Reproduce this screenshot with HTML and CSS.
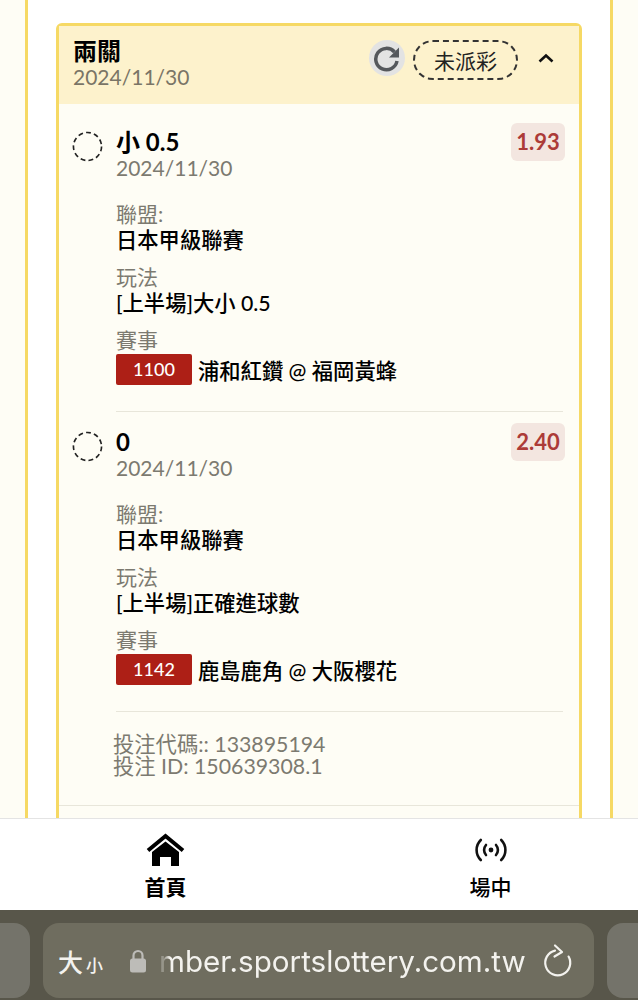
FILE: index.html
```html
<!DOCTYPE html>
<html lang="zh-Hant">
<head>
    <meta charset="UTF-8">
    <title>投注記錄</title>
    <link rel="stylesheet" href="styles.css">
</head>
<body>
    <div class="page">
        <div class="outer">
            <div class="card">
                <div class="card-head">
                    <div class="head-text">
                        <div class="head-title">兩關</div>
                        <div class="head-date">2024/11/30</div>
                    </div>
                    <div class="refresh">
                        <svg width="28" height="28" viewBox="0 0 28 28">
                            <path d="M21.5 8A10.7 10.7 0 1 0 24 17" fill="none" stroke="#55585c" stroke-width="3.5"/>
                            <path d="M26 3.5V13.5H16Z" fill="#55585c"/>
                        </svg>
                    </div>
                    <div class="status">未派彩</div>
                    <svg class="chevron" width="16" height="10" viewBox="0 0 16 10">
                        <path d="M1.5 8.5L8 2.5L14.5 8.5" fill="none" stroke="#111" stroke-width="2.6"/>
                    </svg>
                </div>
                <div class="list">
                    <div class="item">
                        <svg class="circle" width="31" height="31" viewBox="0 0 32 32">
                            <circle cx="16" cy="16" r="14.5" fill="none" stroke="#222" stroke-width="1.7" stroke-dasharray="5 3.3"/>
                        </svg>
                        <div class="item-body">
                            <div class="item-head">
                                <div>
                                    <div class="item-title">小 0.5</div>
                                    <div class="item-date">2024/11/30</div>
                                </div>
                                <div class="odds">1.93</div>
                            </div>
                            <div class="label first">聯盟:</div>
                            <div class="value">日本甲級聯賽</div>
                            <div class="label">玩法</div>
                            <div class="value">[上半場]大小 0.5</div>
                            <div class="label">賽事</div>
                            <div class="match">
                                <span class="match-no">1100</span>
                                <span class="match-name">浦和紅鑽 @ 福岡黃蜂</span>
                            </div>
                        </div>
                    </div>
                    <div class="item">
                        <svg class="circle" width="31" height="31" viewBox="0 0 32 32">
                            <circle cx="16" cy="16" r="14.5" fill="none" stroke="#222" stroke-width="1.7" stroke-dasharray="5 3.3"/>
                        </svg>
                        <div class="item-body">
                            <div class="item-head">
                                <div>
                                    <div class="item-title">0</div>
                                    <div class="item-date">2024/11/30</div>
                                </div>
                                <div class="odds">2.40</div>
                            </div>
                            <div class="label first">聯盟:</div>
                            <div class="value">日本甲級聯賽</div>
                            <div class="label">玩法</div>
                            <div class="value">[上半場]正確進球數</div>
                            <div class="label">賽事</div>
                            <div class="match">
                                <span class="match-no">1142</span>
                                <span class="match-name">鹿島鹿角 @ 大阪櫻花</span>
                            </div>
                        </div>
                    </div>
                </div>
                <div class="codes">
                    <div>投注代碼:: 133895194</div>
                    <div>投注 ID: 150639308.1</div>
                </div>
            </div>
        </div>
    </div>
    <div class="tabbar">
        <div class="tab tab-home">
            <svg width="39" height="34" viewBox="0 0 39 34">
                <path d="M2 17.5L19.5 3L37 17.5" fill="none" stroke="#000" stroke-width="4"/>
                <path d="M19.5 8.5L33 19V33H25V24H14V33H6V19Z" fill="#000"/>
            </svg>
            <span>首頁</span>
        </div>
        <div class="tab tab-live">
            <svg width="38" height="34" viewBox="0 0 38 34">
                <circle cx="19" cy="17" r="2.4" fill="#111"/>
                <path d="M14 12a7.5 7.5 0 0 0 0 10M24 12a7.5 7.5 0 0 1 0 10M8.8 7a14 14 0 0 0 0 20M29.2 7a14 14 0 0 1 0 20" fill="none" stroke="#111" stroke-width="2.6" stroke-linecap="round"/>
            </svg>
            <span>場中</span>
        </div>
    </div>
    <div class="browser">
        <div class="side-tab left"></div>
        <div class="address">
            <span class="text-size"><span class="big">大</span><span class="small">小</span></span>
            <svg class="lock" width="18" height="26" viewBox="0 0 18 26">
                <path d="M4.5 12V7.5a4.5 4.5 0 0 1 9 0V12" fill="none" stroke="#bdbcb8" stroke-width="2.2"/>
                <rect x="1" y="10.5" width="16" height="14" rx="2.5" fill="#bdbcb8"/>
            </svg>
            <span class="url">mber.sportslottery.com.tw</span>
            <svg class="reload" width="32" height="36" viewBox="0 0 32 36">
                <path d="M10.5 8.5A12.5 12.5 0 1 0 25 11.5" transform="rotate(12 16 20)" fill="none" stroke="#f3f2ee" stroke-width="2.2" stroke-linecap="round"/>
                <path d="M13 2.5L20 9L12.5 13.5" fill="none" stroke="#f3f2ee" stroke-width="2.2" stroke-linecap="round" stroke-linejoin="round"/>
            </svg>
        </div>
        <div class="side-tab right"></div>
    </div>
</body>
</html>
```

FILE: styles.css
```css
html, body
{
    height: 100%;
    margin: 0;
    padding: 0;
}
body
{
    height: 1000px;
    overflow: hidden;
    display: flex;
    flex-direction: column;
    background: #fefdf5;
    color: #000;
    font-family: 'Lato', 'Noto Sans CJK TC', sans-serif;
}
.page
{
    height: 818px;
    flex-shrink: 0;
    overflow: hidden;
    padding: 0 25px;
}
.outer
{
    height: 100%;
    background: #fff;
    border-left: 3px solid #f6d964;
    border-right: 3px solid #f6d964;
    padding: 23px 28px 0 28px;
}
.card
{
    border: 3px solid #f6d964;
    border-radius: 6px;
    background: #fefdf5;
    height: 900px;
}
.card-head
{
    height: 78px;
    background: #fdf2cc;
    display: flex;
    align-items: flex-start;
    padding: 0 25px 0 14px;
}
.head-text
{
    flex: 1;
    padding-top: 11px;
}
.head-title
{
    font-size: 24px;
    font-weight: 700;
    line-height: 28px;
}
.head-date
{
    font-size: 21px;
    line-height: 24px;
    color: #7a7566;
}
.refresh
{
    width: 36px;
    height: 36px;
    margin-top: 14px;
    border-radius: 50%;
    background: #e3e3e3;
    display: flex;
    align-items: center;
    justify-content: center;
}
.status
{
    width: 101px;
    height: 36px;
    margin: 14px 0 0 8px;
    border: 2px dashed #333;
    border-radius: 20px;
    text-align: center;
    font-size: 21px;
    line-height: 37px;
    color: #222;
}
.chevron
{
    margin: 27px 0 0 20px;
}
.list
{
    padding: 19px 16px 0 13px;
}
.item
{
    display: flex;
    margin-bottom: 11px;
}
.circle
{
    flex-shrink: 0;
    margin-top: 8px;
}
.item-body
{
    flex: 1;
    margin-left: 13px;
    padding-bottom: 26px;
    border-bottom: 1px solid #e8e6da;
}
.item-head
{
    display: flex;
    justify-content: space-between;
    align-items: flex-start;
    margin-right: -2px;
}
.item-title
{
    margin-top: 5px;
    font-size: 24px;
    font-weight: 700;
    line-height: 28px;
}
.item-date
{
    font-size: 21px;
    line-height: 24px;
    color: #7c7a70;
}
.odds
{
    width: 54px;
    height: 38px;
    border-radius: 6px;
    background: #f3e6e0;
    color: #ac3b38;
    font-size: 22px;
    font-weight: 700;
    line-height: 38px;
    text-align: center;
}
.label
{
    margin-top: 11px;
    font-size: 21px;
    line-height: 26px;
    color: #7c7a70;
}
.label.first
{
    margin-top: 21px;
}
.value
{
    font-size: 21.3px;
    font-weight: 500;
    line-height: 26px;
}
.match
{
    display: flex;
    align-items: center;
    margin-top: 1px;
}
.match-no
{
    width: 76px;
    height: 31px;
    border-radius: 2px;
    background: #ad1f16;
    color: #fff;
    font-size: 18px;
    font-weight: 500;
    line-height: 31px;
    text-align: center;
}
.match-name
{
    margin: 3px 0 0 6px;
    font-size: 21.3px;
    font-weight: 500;
    line-height: 26px;
}
.codes
{
    margin-top: -1px;
    padding: 11px 16px 28px 54px;
    border-bottom: 1px solid #e8e6da;
    font-size: 21.3px;
    line-height: 22px;
    color: #7c7a70;
}
.tabbar
{
    height: 91px;
    flex-shrink: 0;
    position: relative;
    background: #fff;
    border-top: 1px solid #e4e4e4;
    display: flex;
}
.tab
{
    width: 50%;
    display: flex;
    flex-direction: column;
    align-items: center;
    padding-top: 14px;
    font-size: 21px;
    font-weight: 700;
    line-height: 28px;
}
.tab-home
{
    padding-left: 12px;
    box-sizing: border-box;
}
.tab-live
{
    padding-left: 24px;
    box-sizing: border-box;
    font-weight: 500;
}
.tab svg
{
    margin-bottom: 6px;
}
.browser
{
    flex: 1;
    background: #58564a;
    display: flex;
    gap: 13px;
    padding: 13px 0 2px 0;
    overflow: hidden;
}
.side-tab
{
    width: 30px;
    flex-shrink: 0;
    background: #74736a;
    border-radius: 0 16px 16px 0;
}
.side-tab.right
{
    width: 31px;
    border-radius: 16px 0 0 16px;
}
.address
{
    flex: 1;
    background: #6f6d5f;
    border-radius: 16px;
    display: flex;
    align-items: center;
    padding-left: 15px;
    color: #f3f2ee;
}
.text-size
{
    width: 71px;
    font-weight: 500;
}
.big
{
    font-size: 25px;
}
.small
{
    margin-left: 3px;
    font-size: 17px;
}
.lock
{
    flex-shrink: 0;
    margin-right: 12px;
}
.url
{
    font-family: 'Inter', 'Liberation Sans', sans-serif;
    font-size: 29.6px;
    white-space: nowrap;
    -webkit-mask-image: linear-gradient(90deg, rgba(0, 0, 0, 0.3) 0, rgba(0, 0, 0, 0.3) 5px, #000 11px);
    mask-image: linear-gradient(90deg, rgba(0, 0, 0, 0.3) 0, rgba(0, 0, 0, 0.3) 5px, #000 11px);
}
.reload
{
    flex-shrink: 0;
    margin-left: 16px;
}
```
